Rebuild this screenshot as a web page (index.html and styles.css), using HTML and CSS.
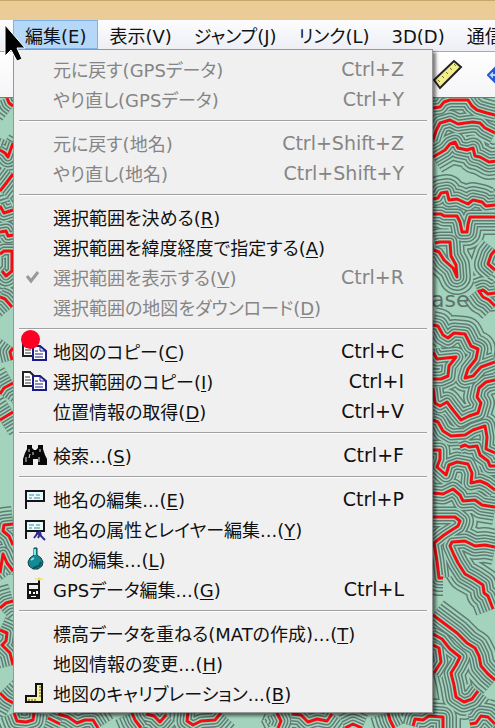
FILE: index.html
```
<!DOCTYPE html>
<html lang="ja">
<head>
  <meta charset="UTF-8" />
  <meta name="viewport" content="width=device-width, initial-scale=1.0"/>
  <title>編集メニュー</title>
  <link rel="stylesheet" href="styles.css">
</head>
<body>
  <header class="titlebar"></header>
  <nav class="menubar">
    <button class="menu-button active">編集(E)</button>
    <button class="menu-button">表示(V)</button>
    <button class="menu-button">ジャンプ(J)</button>
    <button class="menu-button">リンク(L)</button>
    <button class="menu-button latin">3D(D)</button>
    <button class="menu-button">通信</button>
  </nav>
  <div class="toolbar">
    <button class="tool" aria-label="計測">
      <svg width="30" height="34" viewBox="0 0 30 34">
        <path d="M1 22L21 3l7 6L7 30z" fill="#f3ee8c" stroke="#222" stroke-width="2"/>
        <path d="M5 22l2 2M9 18l2 2M13 14l2 2M17 10l2 2M21 6l2 2" stroke="#77752c"/>
      </svg>
    </button>
    <button class="tool" aria-label="移動">
      <svg width="20" height="20" viewBox="0 0 20 20">
        <path d="M1 10l6-6v4h3V4h4v12h-4v-4H7v4z" fill="#bcd6ff" stroke="#2457d6" stroke-width="2"/>
      </svg>
    </button>
  </div>

  <svg class="map" viewBox="0 97 495 631" preserveAspectRatio="xMinYMin slice">
    <defs>
      <g id="ridge">
        <path d="M433 108l7-1 4-5 6-2h18l4 6 5 4 10 3 8 2"/>
        <path d="M433 140l3-9 4-8 10-3 8 4 7-1 8-1 7 1 5 5 10 5"/>
        <path d="M433 157l12-7 5-6 5-2 3 6 9 2 6-2 2 8 5 1 9 5 8-1"/>
        <path d="M433 199l5-1 3-5 6-1 2 8 8-1 11 5 5-4 9 2 4 4 9-1"/>
        <path d="M433 214h8l3 2h13l3 6 2 10h5l1-8 2-7h25"/>
        <path d="M435 243l5-1h10l1 14 5 9 1 12-4-9-9-8-5-8-5-2"/>
        <path d="M495 250l-4 5-3 9 7 6M478 292l5-2 5 4 7-1M478 290l5 7 6 3 6 6"/>
        <path d="M433 325l5 1 5 9 5 3 6-5 11 1 6 12 7 3-2 10-8 10-3 9 8-2 8-9 14-5"/>
        <path d="M433 352l4 7 9-1 10-1-7 9-1 10-7 3h-8M433 388l2 15 5 3 7-4 6 8 8 10 8-4 9-3 3-10-4-6 2-9 7-6 9-2"/>
        <path d="M433 420l5 2 5 9 8 5 14-1 8-5 12-4 2 11-1 12 9 4"/>
        <path d="M433 450h7v9l-3 8 9 8 3-10 8-3 11 2 4 9-1 10 9-2 7 3 8 6"/>
        <path d="M433 493l10 1 10-5 7 6 3 6 12-1 7 5 13 2M460 447l5-2 4 2 8-1 3 9 8 6 2 5h5"/>
        <path d="M433 517h22l5 4-2 5-14 9-10 8 3 18 2 17h4"/>
        <path d="M495 547l-10-2-10 1-10-5-13 1-2 4 4 9 4 8 7 11 9 5 9 6 1 8 4 3 5 13"/>
        <path d="M433 615l12 9 12 9 10 10 8 5 4 8 2 10 7 8 7 6"/>
        <path d="M433 634l9 5 8 10 10 8-4 8-5 8 3 12 2 12 8 5 8-3 6-8"/>
        <path d="M433 645l6 3 2 14-7 11M470 724l6-1 5-7 7 1 7 7"/>
        <path d="M58 714l10 3 9 6 8-3h8l5 8M132 713l3 7 6 8M146 714l8 2 6 6 6-7M188 712l-1 9 6 4 8-4 14-1 6-7M277 713l4 8-3 7M292 714l9 1 7 7 9-3 10 2 5-7M388 713l2 7 4 8M413 726l2-7 8 1 6-4 14 1v11"/>
        <path d="M14 713l3 8 9 1 7-2 1-7M48 718l12 6M345 728l8-4 9 4"/>
        <path d="M7 98l2 5 4 3M0 150l5 3 3 4 5-14M13 174l-6 8-7 9M0 206l4 7 9-3M0 232l6-1 2 5 5-1"/>
        <path d="M0 254l4-3h8v20l-6 5-4-5M0 297l5 2 7 8M13 348l-3 4 2 8M0 394l4-6 9-5M0 420l13-8"/>
        <path d="M13 524l-9 1-1 6 6 5 4 9M0 573l3-19 4 9 6 8M0 608l6-5 7-2M0 630l7 3-1 8-4 4 8 8 3 12M0 693l6 6 7 4"/>
      </g>
    </defs>
    <rect x="0" y="97" width="495" height="631" fill="#a3d3bc"/>
    <!-- contour lines: nested strokes, widest first -->
    <g fill="none" stroke-linejoin="round">
      <use href="#ridge" class="contour w5"/><use href="#ridge" class="ground w5b"/>
      <use href="#ridge" class="contour w4"/><use href="#ridge" class="ground w4b"/>
      <use href="#ridge" class="contour w3"/><use href="#ridge" class="ground w3b"/>
      <use href="#ridge" class="contour w2"/><use href="#ridge" class="ground w2b"/>
      <use href="#ridge" class="contour w1"/><use href="#ridge" class="ground w1b"/>
      <use href="#ridge" class="road"/>
    </g>
    <text x="431" y="307" class="place">ase</text>
    <rect x="0" y="97" width="495" height="1" fill="#777"/>
  </svg>

  <div class="menu">
    <button class="item" disabled><span class="icon"></span><span>元に戻す(GPSデータ)</span><kbd>Ctrl+Z</kbd></button>
    <button class="item" disabled><span class="icon"></span><span>やり直し(GPSデータ)</span><kbd>Ctrl+Y</kbd></button>
    <hr>
    <button class="item" disabled><span class="icon"></span><span>元に戻す(地名)</span><kbd>Ctrl+Shift+Z</kbd></button>
    <button class="item" disabled><span class="icon"></span><span>やり直し(地名)</span><kbd>Ctrl+Shift+Y</kbd></button>
    <hr>
    <button class="item"><span class="icon"></span><span>選択範囲を決める(<u>R</u>)</span></button>
    <button class="item"><span class="icon"></span><span>選択範囲を緯度経度で指定する(<u>A</u>)</span></button>
    <button class="item" disabled>
      <span class="icon"><svg width="26" height="24" viewBox="0 0 26 24"><path d="M6 11l4 5 7-9" fill="none" stroke="#999" stroke-width="3"/></svg></span>
      <span>選択範囲を表示する(<u>V</u>)</span><kbd>Ctrl+R</kbd>
    </button>
    <button class="item" disabled><span class="icon"></span><span>選択範囲の地図をダウンロード(<u>D</u>)</span></button>
    <hr>
    <button class="item">
      <span class="icon">
        <svg width="26" height="24" viewBox="0 0 26 24">
          <path d="M2 3h7l4 4v10H2z" fill="#fff" stroke="#222" stroke-width="2"/>
          <path d="M4 8h5M4 11h6M4 14h6" stroke="#333"/>
          <path d="M12 7h7l6 5v9H12z" fill="#fff" stroke="#1c1c86" stroke-width="2"/>
          <path d="M19 7v5h6M14 12h3M14 15h8M14 18h8" fill="none" stroke="#1c1c86"/>
        </svg>
        <span class="marker"></span>
      </span>
      <span>地図のコピー(<u>C</u>)</span><kbd>Ctrl+C</kbd>
    </button>
    <button class="item">
      <span class="icon">
        <svg width="26" height="24" viewBox="0 0 26 24">
          <path d="M2 3h7l4 4v10H2z" fill="#fff" stroke="#222" stroke-width="2"/>
          <path d="M4 8h5M4 11h6M4 14h6" stroke="#333"/>
          <path d="M12 7h7l6 5v9H12z" fill="#fff" stroke="#1c1c86" stroke-width="2"/>
          <path d="M19 7v5h6M14 12h3M14 15h8M14 18h8" fill="none" stroke="#1c1c86"/>
        </svg>
      </span>
      <span>選択範囲のコピー(<u>I</u>)</span><kbd>Ctrl+I</kbd>
    </button>
    <button class="item"><span class="icon"></span><span>位置情報の取得(<u>D</u>)</span><kbd>Ctrl+V</kbd></button>
    <hr>
    <button class="item">
      <span class="icon">
        <svg width="26" height="24" viewBox="0 0 26 24">
          <path d="M6 2h5v3l2 2h2l2-2V2h5v4l2 6 2 4v6h-9v-6h-5v6H2v-6l2-6 2-4z" fill="#080808"/>
          <path d="M8 6v3M19 6v3M5 14v5M9 11l-1 4M18 14v5M12 9v3" stroke="#ddd"/>
        </svg>
      </span>
      <span>検索...(<u>S</u>)</span><kbd>Ctrl+F</kbd>
    </button>
    <hr>
    <button class="item">
      <span class="icon">
        <svg width="26" height="24" viewBox="0 0 26 24">
          <path d="M5 22V4h18v10H5" fill="#e5fbff" stroke="#151515" stroke-width="2"/>
          <path d="M8 8h5M15 8h4M8 11h3M13 11h6" stroke="#4b8492"/>
        </svg>
      </span>
      <span>地名の編集...(<u>E</u>)</span><kbd>Ctrl+P</kbd>
    </button>
    <button class="item">
      <span class="icon">
        <svg width="26" height="24" viewBox="0 0 26 24">
          <path d="M5 22V4h18v10H5" fill="#e5fbff" stroke="#151515" stroke-width="2"/>
          <path d="M8 8h5M15 8h4M8 11h3M13 11h6" stroke="#4b8492"/>
          <path d="M13 21l3-4 3-2 1 4 4 4M15 16l4 1-2 4" fill="none" stroke="#302c8c" stroke-width="2"/>
        </svg>
      </span>
      <span>地名の属性とレイヤー編集...(<u>Y</u>)</span>
    </button>
    <button class="item">
      <span class="icon">
        <svg width="26" height="24" viewBox="0 0 26 24">
          <path d="M13 1h3v7l4 3 2 4-1 4-4 3h-5l-4-3-1-4 2-4 4-3z" fill="#138b94" stroke="#123b40"/>
          <path d="M14 2v6M10 13l3-2" stroke="#6ff0f0" stroke-width="2"/>
          <path d="M12 21l6-2 2-4" fill="none" stroke="#07565d" stroke-width="2"/>
        </svg>
      </span>
      <span>湖の編集...(<u>L</u>)</span>
    </button>
    <button class="item">
      <span class="icon">
        <svg width="26" height="24" viewBox="0 0 26 24">
          <path d="M18 7V3" stroke="#111" stroke-width="2"/>
          <path d="M14 2h8M18 0v4" stroke="#f0d64a"/>
          <path d="M6 6h13v16H6z" fill="#151515"/>
          <path d="M8 8h9v4H8z" fill="#eee"/>
          <path d="M8 14h2v3H8zM12 15h2v2h-2zM15 14h2v3h-2zM10 19h5v1h-5z" fill="#fff"/>
        </svg>
      </span>
      <span>GPSデータ編集...(<u>G</u>)</span><kbd>Ctrl+L</kbd>
    </button>
    <hr>
    <button class="item"><span class="icon"></span><span>標高データを重ねる(MATの作成)...(<u>T</u>)</span></button>
    <button class="item"><span class="icon"></span><span>地図情報の変更...(<u>H</u>)</span></button>
    <button class="item">
      <span class="icon">
        <svg width="26" height="24" viewBox="0 0 26 24">
          <path d="M15 3h6v18H5v-6h10z" fill="#f4efa0" stroke="#111" stroke-width="2"/>
          <path d="M18 6h2M18 9h2M18 12h2M18 15h2M8 18v2M11 18v2M14 18v2" stroke="#55521e"/>
        </svg>
      </span>
      <span>地図のキャリブレーション...(<u>B</u>)</span>
    </button>
  </div>

  <svg class="cursor" width="22" height="38" viewBox="0 0 22 38">
    <path d="M1 1v31l6-6 6 11 5-2-5-11h8z" fill="#000" stroke="#fff"/>
  </svg>
</body>
</html>
```

FILE: styles.css
```
* { box-sizing: border-box; }
body {
  margin: 0;
  min-height: 100vh;
  display: flex;
  flex-direction: column;
  position: relative;
  overflow: hidden;
  font-family: "DejaVu Sans", "Noto Sans CJK JP", sans-serif;
  font-size: 18px;
  font-feature-settings: "palt";
}
button, kbd { font: inherit; font-feature-settings: inherit; color: inherit; }

.titlebar { height: 20px; background: #ebcc96; border-top: 1px solid #c9a66b; }
.menubar { display: flex; height: 32px; padding: 0 0 2px 13px; overflow: hidden; background: linear-gradient(#fdfdfe, #eceef5); border-bottom: 1px solid #aaa; }
.menu-button { flex: none; border: 1px solid transparent; background: none; padding: 0 10px; white-space: nowrap; color: #111; }
.menu-button.active { background: #b5d7f8; border-color: #7fb2ea; padding: 0 11px; }
.menu-button.latin { padding-top: 4px; }

.toolbar { display: flex; justify-content: flex-end; align-items: center; height: 45px; background: linear-gradient(#fff, #f5f5f7); overflow: hidden; }
.tool { display: flex; flex: none; border: 0; background: none; padding: 0; margin-left: 24px; }
.tool:last-child { margin-right: -12px; }

.map { display: block; flex: 1; width: 100%; min-height: 0; }
.contour { stroke: #5f7b73; }
.ground { stroke: #a3d3bc; }
.road { stroke: #f20d12; stroke-width: 3px; }
.w5 { stroke-width: 36px; }
.w5b { stroke-width: 33px; }
.w4 { stroke-width: 28px; }
.w4b { stroke-width: 25px; }
.w3 { stroke-width: 21px; }
.w3b { stroke-width: 18px; }
.w2 { stroke-width: 15px; }
.w2b { stroke-width: 12px; }
.w1 { stroke-width: 9px; }
.w1b { stroke-width: 6px; }
.place { font-size: 22px; fill: #5d7169; }

.menu {
  position: absolute;
  top: 49px;
  left: 13px;
  right: 62px;
  padding: 4px;
  background: #f0f0f0;
  border: 1px solid #979797;
  box-shadow: 3px 3px 3px rgba(0, 0, 0, 0.5);
}
.menu hr { height: 2px; margin: 6px 1px; border: 0; border-top: 1px solid #a0a0a0; background: #fff; }
.item { display: flex; align-items: center; width: 100%; height: 30px; border: 0; background: none; padding: 0 24px 0 3px; text-align: left; white-space: nowrap; color: #111; }
.item:disabled { color: #858585; }
.item u { text-underline-offset: 2px; }
.icon { position: relative; flex: none; display: flex; width: 32px; }
.item kbd { margin-left: auto; font-size: 19px; }
.marker { position: absolute; top: -9px; left: 0; width: 19px; height: 19px; border-radius: 50%; background: #fb0022; }
.cursor { position: absolute; top: 24px; left: 4px; }
```
